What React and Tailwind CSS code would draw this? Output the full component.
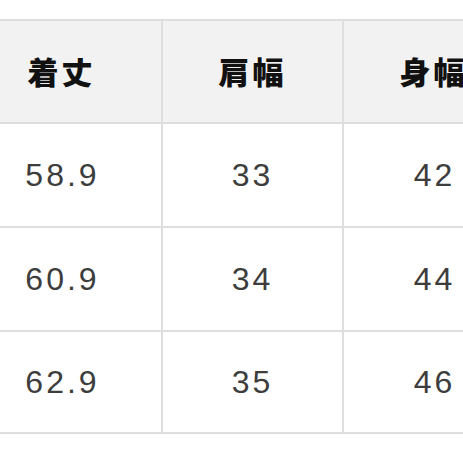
const headers = ['着丈', '肩幅', '身幅'];
const rows = [
  ['58.9', '33', '42'],
  ['60.9', '34', '44'],
  ['62.9', '35', '46'],
];
const rowHeights = ['h-[102px]', 'h-[102px]', 'h-[100px]'];

export default function App() {
  return (
    <div className="w-[463px] h-[463px] overflow-hidden bg-white pt-[19px]">
      <div className="grid w-[565px] grid-cols-[161px_179px_221px] gap-[2px] bg-[#dedede] py-[2px]">
        {headers.map((h, i) => (
          <div
            key={h}
            className={`h-[101px] flex items-center justify-center bg-[#f2f2f2] text-[31px] font-extrabold tracking-[3px] text-[#111111] ${i === 0 ? 'pr-[38px]' : ''} ${i === 2 ? 'pr-[42px]' : ''}`}
            style={{ fontFamily: '"Noto Sans CJK JP", "Noto Sans", sans-serif' }}
          >
            {h}
          </div>
        ))}
        {rows.map((r, ri) =>
          r.map((v, i) => (
            <div
              key={`${ri}-${i}`}
              className={`${rowHeights[ri]} flex items-center justify-center bg-white text-[32px] tracking-[3px] text-[#3d3d3d] ${i === 0 ? 'pr-[36px]' : ''} ${i === 2 ? 'pr-[40px]' : ''}`}
              style={{ fontFamily: '"Liberation Sans", Arial, sans-serif' }}
            >
              {v}
            </div>
          ))
        )}
      </div>
    </div>
  );
}
